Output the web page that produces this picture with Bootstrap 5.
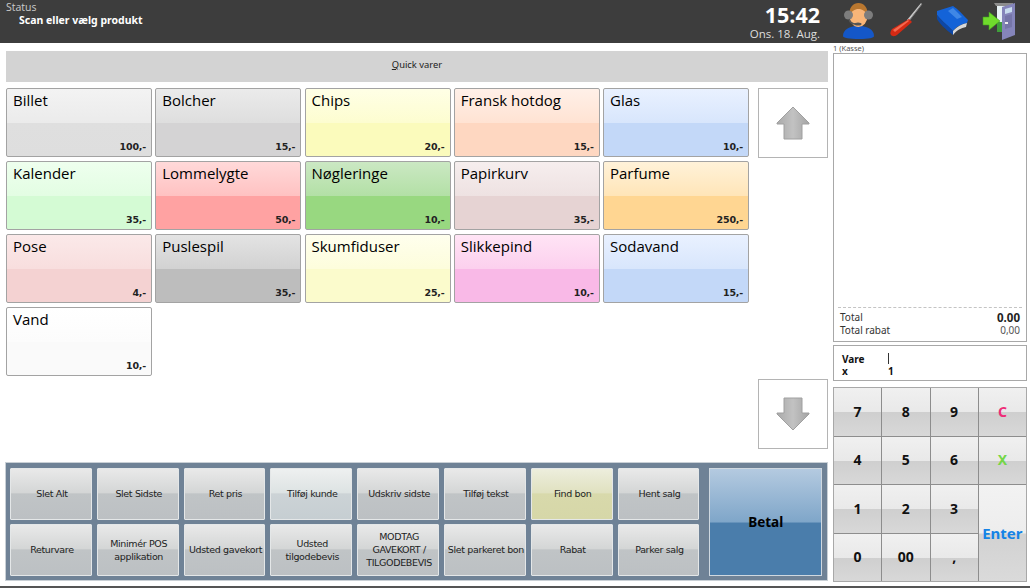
<!doctype html>
<html lang="da"><head><meta charset="utf-8"><title>POS</title>
<link href="https://cdn.jsdelivr.net/npm/bootstrap@5.3.0/dist/css/bootstrap.min.css" rel="stylesheet">
<style>
html,body{height:588px;overflow:hidden;background:#fff}
body{font-family:"Noto Sans",sans-serif;color:#000;width:1030px;border-bottom:2px solid #555}
.topbar{height:43px;background:#3d3d3d;color:#fff}
.st-label{font:10.5px/13px "Open Sans",sans-serif;color:#ccc;margin:1px 0 0 6px}
.st-text{font:700 10.5px/13px "Noto Sans",sans-serif;margin:0 0 0 19px}
.clock{width:80px;margin:4px 0 0 740px;text-align:right;white-space:nowrap}
.clock-t{font:700 21.5px/22px "Open Sans",sans-serif;margin-bottom:1px}
.clock-d{font:11.5px/14px "Open Sans",sans-serif;color:#ddd}
.tool-ic{width:48px;height:43px;display:block}
.left-col{width:822px;margin-left:6px}
.right-col{width:194px;margin-left:5px}
.quick{height:31px;margin-top:8px;background:#d3d3d3;font:9.4px/28px "Noto Sans",sans-serif;text-align:center;color:#222}
.tiles{display:grid;grid-template-columns:repeat(5,146px);grid-auto-rows:69px;column-gap:3.25px;row-gap:4px;margin-top:6px;height:361px;width:742px;align-content:start}
.tile{border:1px solid #a3a3a3;border-radius:2px;display:flex;flex-direction:column;justify-content:space-between;padding:0 5px 2px 6px}
.tile-n{font:15px/23px "Open Sans",sans-serif;color:#000}
.tile-p{font:700 9.5px/14px "DejaVu Sans",sans-serif;text-align:right;letter-spacing:-.2px;color:#222}
.arrows{width:70px;margin:6px 0 0 10px;height:361px}
.arrow-b{height:70px;border:1px solid #b4b4b4;background:#fff}
.panel{height:119px;margin:13px 0 0 -1px;width:823px;background:#6f8296;border:1px solid #c9d0d6;padding:5px 5px 4px 4px;display:flex}
.fn-grid{display:grid;grid-template-columns:repeat(8,81.8px);grid-auto-rows:52px;column-gap:5px;row-gap:4px}
.fn{border:1px solid #e4e7e8;border-radius:1px;font:9.5px/13px "DejaVu Sans",sans-serif;color:#222;padding:0 0 1px 2px;display:flex;align-items:center;justify-content:center;text-align:center;letter-spacing:-.35px;background:linear-gradient(#e9e9e9 0,#d4d6d6 47%,#c0c4c6 50%,#bcc0c3 100%)}
.fn-tan{background:linear-gradient(#edeedd 0,#e0e1c0 47%,#d8d9ab 50%,#d6d7a8 100%)}
.fn-lt{background:linear-gradient(#eef0f0 0,#dde3e3 47%,#ccd3d6 50%,#c6ced2 100%)}
.fn-pay{width:113px;margin-left:10px;border:1px solid #cfd8e0;background:linear-gradient(#b4cae0 0,#7fa6c9 50%,#4a7dab 51%,#4a7dab 100%);display:flex;align-items:center;justify-content:center;font:700 13.5px/18px "Noto Sans",sans-serif;color:#000}
.kasse{font:7.5px/9px "Noto Sans",sans-serif;color:#555;height:9px;margin-top:1px}
.receipt{height:289px;border:1px solid #a8a8a8;display:flex;flex-direction:column;justify-content:flex-end;padding:0 4px 4px 4px}
.tot{border-top:1px dashed #c4c4c4;padding:3px 2px 0}
.tot-l{font:10px/13px "Noto Sans",sans-serif;color:#333}
.tot-b{font:700 11.500px/13px "Noto Sans",sans-serif;color:#222}
.tot-s{font:10px/13px "Noto Sans",sans-serif;color:#555}
.entry{height:36px;margin-top:3px;border:1px solid #a8a8a8;padding:7px 0 0 8px;font:700 10px/12px "Noto Sans",sans-serif;display:grid;grid-template-columns:46px 1fr;grid-auto-rows:12px;color:#111}
.caret{display:block;width:1px;height:11px;background:#333}
.keys{height:195px;margin-top:6px;border:1px solid #a8a8a8;display:grid;grid-template-columns:repeat(4,1fr);grid-template-rows:repeat(4,1fr);background:#8d8d8d;gap:1px}
.key{display:flex;align-items:center;justify-content:center;font:700 14px/16px "Noto Sans",sans-serif;color:#111;background:linear-gradient(#f0f0f0 0,#e9e9e9 50%,#cfcfcf 51%,#d8d8d8 100%)}
.key-c{color:#ee2d78}.key-x{color:#74d648}
.key-enter{grid-row:span 2;color:#1583e6;font-size:15px;background:linear-gradient(#f2f2f2 0,#ededed 50%,#d2d2d2 51%,#dadada 100%)}
.c1{background:linear-gradient(#f3f3f3 0,#ebebeb 50%,#dfdfdf 51%,#dedede 100%)}
.c2{background:linear-gradient(#ebebeb 0,#dedede 50%,#d4d3d4 51%,#d4d3d4 100%)}
.c3{background:linear-gradient(#ffffe6 0,#fdfdd0 50%,#fbfbbc 51%,#fbfbbc 100%)}
.c4{background:linear-gradient(#fff0e8 0,#ffe3d3 50%,#fed7c1 51%,#fed7c1 100%)}
.c5{background:linear-gradient(#e9f1ff 0,#d8e6fc 50%,#c3d8f8 51%,#c3d8f8 100%)}
.c6{background:linear-gradient(#eeffee 0,#e3fde3 50%,#d4fbd4 51%,#d4fbd4 100%)}
.c7{background:linear-gradient(#ffd9d9 0,#ffc2c2 50%,#ffa2a2 51%,#ffa2a2 100%)}
.c8{background:linear-gradient(#cbe8c3 0,#b3e0a6 50%,#98d880 51%,#98d880 100%)}
.c9{background:linear-gradient(#f6eeee 0,#eee2e2 50%,#e6d3d3 51%,#e6d3d3 100%)}
.c10{background:linear-gradient(#fff2d9 0,#ffe5b8 50%,#ffd692 51%,#ffd692 100%)}
.c11{background:linear-gradient(#fbe9e9 0,#f8dede 50%,#f4d2d2 51%,#f4d2d2 100%)}
.c12{background:linear-gradient(#e3e3e3 0,#d2d2d2 50%,#bdbdbd 51%,#bdbdbd 100%)}
.c13{background:linear-gradient(#ffffed 0,#fdfddc 50%,#fbfbcc 51%,#fbfbcc 100%)}
.c14{background:linear-gradient(#ffe4f5 0,#fcd0ee 50%,#f9b9e7 51%,#f9b9e7 100%)}
.c16{background:linear-gradient(#fff 0,#fcfcfc 50%,#fafafa 51%,#fafafa 100%)}
</style></head>
<body class="d-flex flex-column">
<div class="topbar d-flex flex-shrink-0">
  <div class="position-absolute"><div class="st-label">Status</div><div class="st-text">Scan eller vælg produkt</div></div>
  <div class="clock flex-shrink-0"><div class="clock-t">15:42</div><div class="clock-d">Ons. 18. Aug.</div></div>
  <div class="d-flex ms-auto me-1">
    <svg class="tool-ic" viewBox="0 0 48 43"><path d="M9 36c0-7 7-9 12-10h7c5 1 12 3 12 10 0 2-5 3-15 3S9 38 9 36z" fill="#1457c8"/><ellipse cx="24.500" cy="16" rx="9" ry="11" fill="#f8b578"/><path d="M15.500 16c-1-9 4-13 9-13s10 4 9 13c-2-5-5-7-9-7s-7 2-9 7z" fill="#b9772f"/><circle cx="14.500" cy="15" r="4.500" fill="#7d7d7d"/><circle cx="34.500" cy="15" r="4.500" fill="#7d7d7d"/><path d="M15 19c1 4 3 5 7 5" stroke="#555" fill="none" stroke-width="1.500"/><ellipse cx="24" cy="24" rx="3.500" ry="1.500" fill="#555"/></svg>
    <svg class="tool-ic" viewBox="0 0 48 43"><path d="M39 3l1 1-13 17-2-1z" fill="#c8c8c8"/><path d="M39 3l1 1-13 17" stroke="#777" fill="none"/><path d="M27 19l3 3-15 13c-3 2-5 1-6 0s-1-3 1-6z" fill="#d62a14"/><path d="M11 30l15-10 1 1-14 11z" fill="#f46a50"/></svg>
    <svg class="tool-ic" viewBox="0 0 48 43"><path d="M7 11L23 6c5 3 10 9 15 14l-1 3c-4 1-9 2-14 8C16 24 10 19 7 15z" fill="#1463d8"/><path d="M23 8l9 9-5 2-9-8z" fill="#3f87e6"/><path d="M7 15c3 4 9 9 16 16v4C15 29 10 24 7 19z" fill="#0d47a6"/><path d="M23 31c5-5 9-7 14-8l-1 4c-5 1-9 3-13 8z" fill="#d8d8d8"/></svg>
    <svg class="tool-ic" viewBox="0 0 48 43"><path d="M16 3h19v29h-6v-26H18z" fill="#8d8d8d"/><path d="M19 6h11v26H19z" fill="#e8f2f6"/><path d="M19 22h9v10h-9z" fill="#3f9e3a"/><path d="M24 7l13-4v32l-13 5z" fill="#8585ba"/><path d="M27 9l7-2v5l-7 2z" fill="#c8dcee"/><path d="M27 16l7-2v13l-7 2z" fill="#7575a8"/><rect x="27" y="22" width="3" height="2" fill="#eee"/><path d="M5 17h6v-5l11 9-11 9v-5H5z" fill="#6fdc2c" stroke="#3f9e1e" stroke-width=".6"/></svg>
  </div>
</div>
<div class="d-flex flex-grow-1">
  <div class="left-col flex-shrink-0">
    <div class="quick"><u>Q</u>uick varer</div>
    <div class="d-flex">
      <div class="tiles">
        <div class="tile c1"><div class="tile-n">Billet</div><div class="tile-p">100,-</div></div>
        <div class="tile c2"><div class="tile-n">Bolcher</div><div class="tile-p">15,-</div></div>
        <div class="tile c3"><div class="tile-n">Chips</div><div class="tile-p">20,-</div></div>
        <div class="tile c4"><div class="tile-n">Fransk hotdog</div><div class="tile-p">15,-</div></div>
        <div class="tile c5"><div class="tile-n">Glas</div><div class="tile-p">10,-</div></div>
        <div class="tile c6"><div class="tile-n">Kalender</div><div class="tile-p">35,-</div></div>
        <div class="tile c7"><div class="tile-n">Lommelygte</div><div class="tile-p">50,-</div></div>
        <div class="tile c8"><div class="tile-n">Nøgleringe</div><div class="tile-p">10,-</div></div>
        <div class="tile c9"><div class="tile-n">Papirkurv</div><div class="tile-p">35,-</div></div>
        <div class="tile c10"><div class="tile-n">Parfume</div><div class="tile-p">250,-</div></div>
        <div class="tile c11"><div class="tile-n">Pose</div><div class="tile-p">4,-</div></div>
        <div class="tile c12"><div class="tile-n">Puslespil</div><div class="tile-p">35,-</div></div>
        <div class="tile c13"><div class="tile-n">Skumfiduser</div><div class="tile-p">25,-</div></div>
        <div class="tile c14"><div class="tile-n">Slikkepind</div><div class="tile-p">10,-</div></div>
        <div class="tile c5"><div class="tile-n">Sodavand</div><div class="tile-p">15,-</div></div>
        <div class="tile c16"><div class="tile-n">Vand</div><div class="tile-p">10,-</div></div>
      </div>
      <div class="arrows d-flex flex-column justify-content-between">
        <div class="arrow-b d-flex align-items-center justify-content-center"><svg width="34" height="34" viewBox="0 0 34 34"><defs><linearGradient id="g1" x1="0" y1="0" x2="1" y2="0"><stop offset="0" stop-color="#aaa"/><stop offset=".5" stop-color="#c2c2c2"/><stop offset="1" stop-color="#a4a4a4"/></linearGradient></defs><path d="M17 1L33 17v1H26v15H8V18H1v-1z" fill="url(#g1)" stroke="#a0a0a0"/></svg></div>
        <div class="arrow-b d-flex align-items-center justify-content-center"><svg width="34" height="34" viewBox="0 0 34 34"><path d="M8 1h18v15h7v1L17 33 1 17v-1h7z" fill="url(#g1)" stroke="#a0a0a0"/></svg></div>
      </div>
    </div>
    <div class="panel">
      <div class="fn-grid">
        <div class="fn">Slet Alt</div><div class="fn">Slet Sidste</div><div class="fn">Ret pris</div><div class="fn fn-lt">Tilføj kunde</div><div class="fn">Udskriv sidste</div><div class="fn">Tilføj tekst</div><div class="fn fn-tan">Find bon</div><div class="fn">Hent salg</div>
        <div class="fn">Returvare</div><div class="fn">Minimér POS applikation</div><div class="fn">Udsted gavekort</div><div class="fn">Udsted tilgodebevis</div><div class="fn">MODTAG GAVEKORT / TILGODEBEVIS</div><div class="fn">Slet parkeret bon</div><div class="fn">Rabat</div><div class="fn">Parker salg</div>
      </div>
      <div class="fn-pay">Betal</div>
    </div>
  </div>
  <div class="right-col flex-shrink-0">
    <div class="kasse">1 (Kasse)</div>
    <div class="receipt">
      <div class="tot">
        <div class="d-flex justify-content-between"><span class="tot-l">Total</span><span class="tot-b">0.00</span></div>
        <div class="d-flex justify-content-between"><span class="tot-l">Total rabat</span><span class="tot-s">0,00</span></div>
      </div>
    </div>
    <div class="entry"><span>Vare</span><span><i class="caret"></i></span><span>x</span><span>1</span></div>
    <div class="keys">
      <div class="key">7</div><div class="key">8</div><div class="key">9</div><div class="key key-c">C</div>
      <div class="key">4</div><div class="key">5</div><div class="key">6</div><div class="key key-x">X</div>
      <div class="key">1</div><div class="key">2</div><div class="key">3</div><div class="key key-enter">Enter</div>
      <div class="key">0</div><div class="key">00</div><div class="key">,</div>
    </div>
  </div>
</div>
<script src="https://cdn.jsdelivr.net/npm/bootstrap@5.3.0/dist/js/bootstrap.bundle.min.js"></script>
</body></html>
